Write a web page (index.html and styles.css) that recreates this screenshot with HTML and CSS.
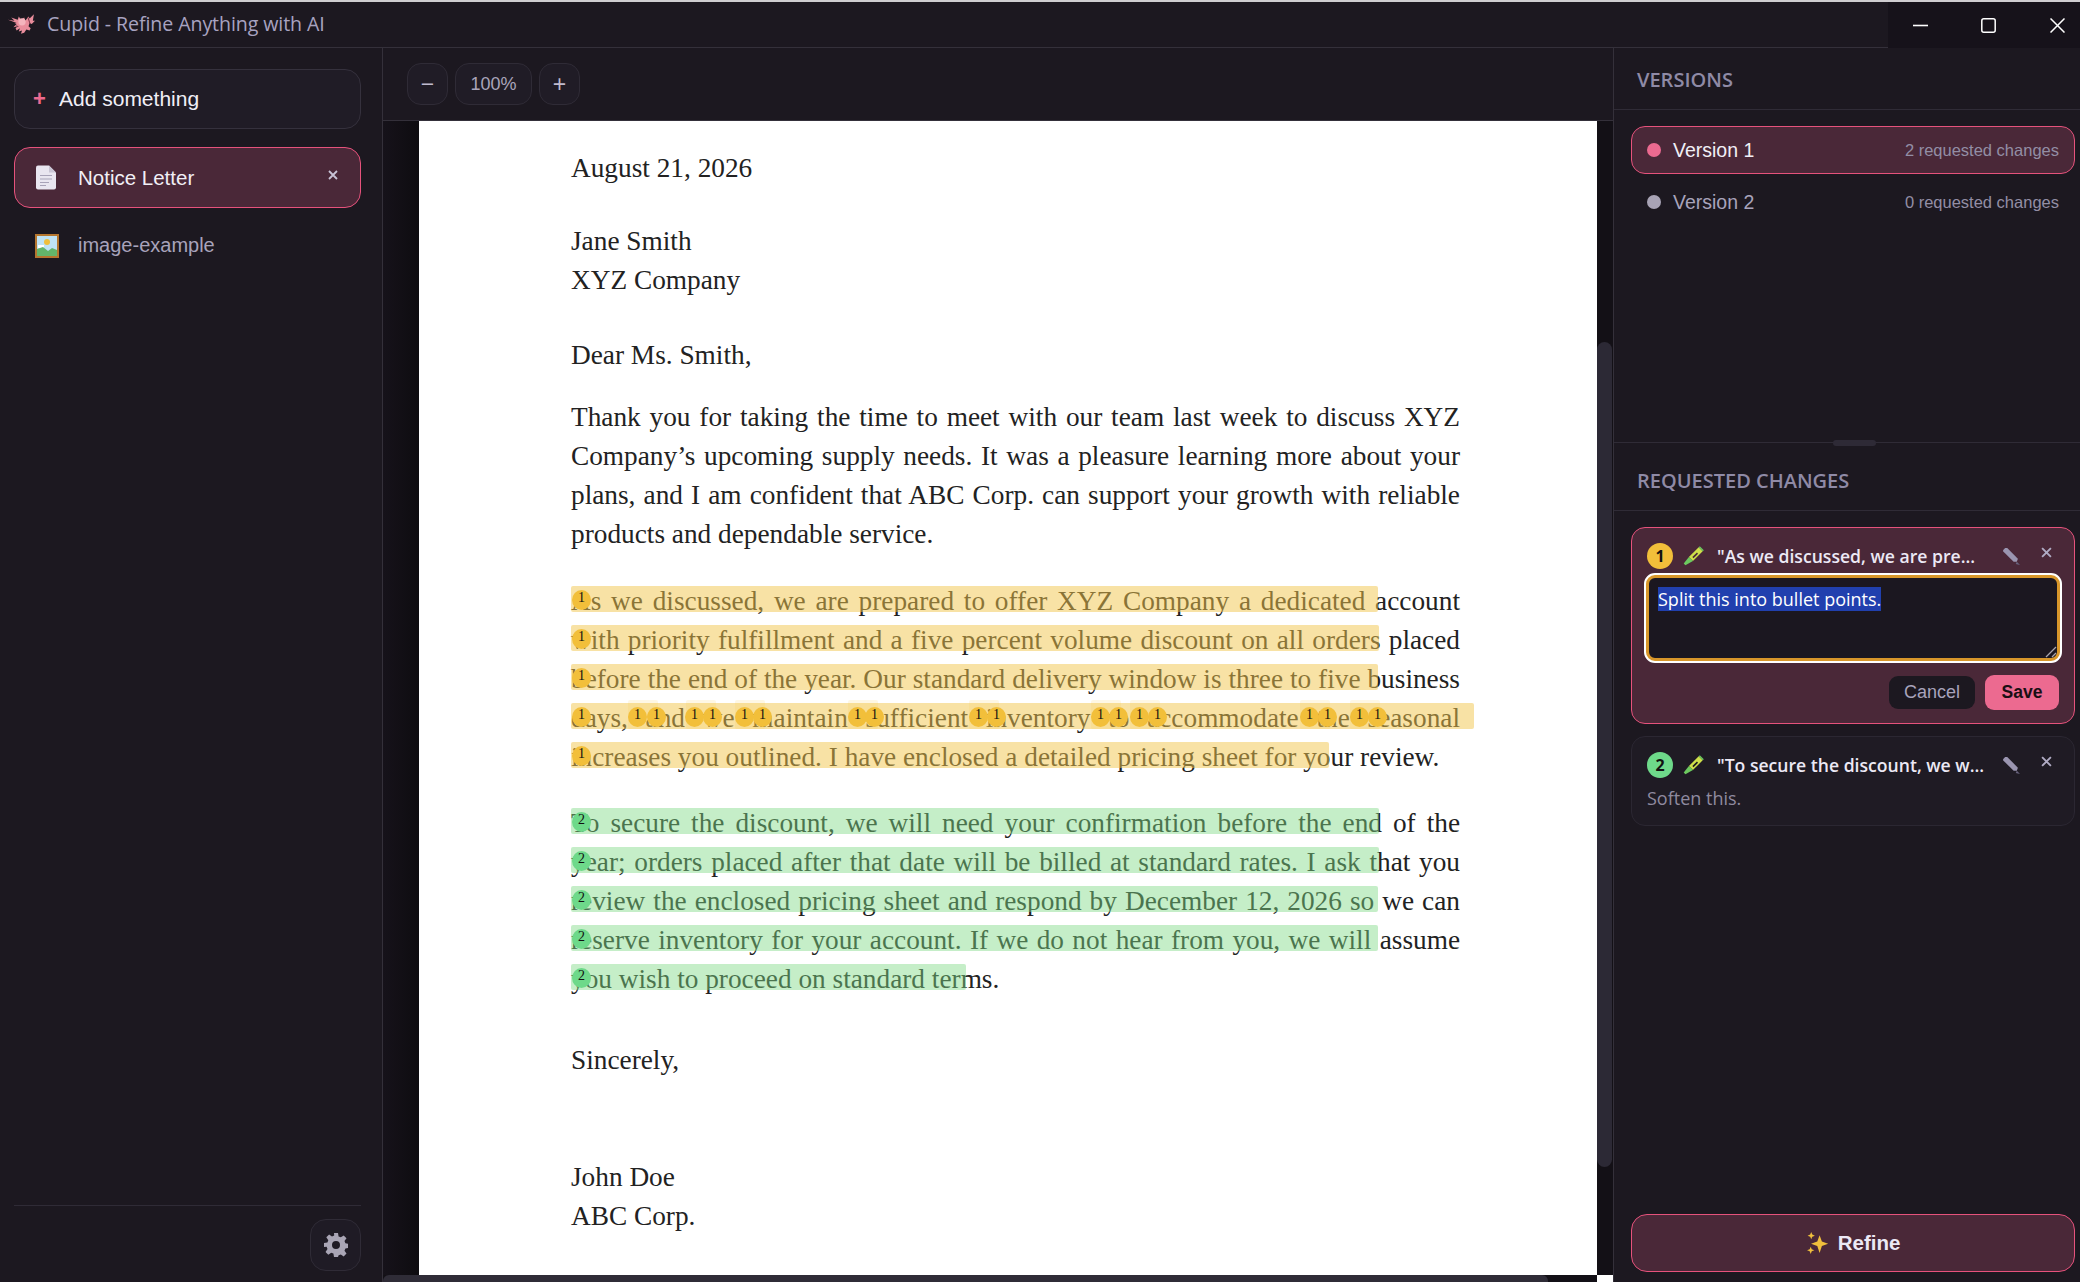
FILE: index.html
```html
<!DOCTYPE html>
<html lang="en">
<head>
<meta charset="utf-8">
<title>Cupid - Refine Anything with AI</title>
<link rel="stylesheet" href="styles.css">
</head>
<body>
<div class="frame">
  <header class="titlebar">
    <div class="brand">
      <svg class="logo" viewBox="1 1 25 18"><path fill="#e98d9c" d="M1 6l6 1-3-3 6 2 1-3 2 3 3-2 1 3 3-4 1 2 4-4-1 6 2 0-3 3-2-1-1 3 2 2-1 2-3-1-2 3-3 1 1-3-3 1 1-3-3 2-1-2 2-2-4 1 3-3-2 0 2-1z"/><circle cx="14" cy="8" r="3.4" fill="#f4b4bd"/><path fill="#7c3a4a" d="M19 4l1 0 2 6-1 0zM8 11l3 1-1 1z"/></svg>
      <span class="app-title">Cupid - Refine Anything with AI</span>
    </div>
    <div class="winctl">
      <svg viewBox="0 0 15 15" class="w-min"><path d="M0 7.5h15" stroke="#fff" stroke-width="1.6"/></svg>
      <svg viewBox="0 0 15 15" class="w-max"><rect x=".8" y=".8" width="13.4" height="13.4" rx="2" fill="none" stroke="#fff" stroke-width="1.5"/></svg>
      <svg viewBox="0 0 15 15" class="w-close"><path d="M.5.5l14 14M14.5.5l-14 14" stroke="#fff" stroke-width="1.5"/></svg>
    </div>
  </header>
  <div class="app">
    <aside class="sidebar">
      <button class="add"><span class="plus">+</span>Add something</button>
      <div class="file active">
        <svg class="ficon" viewBox="0 0 20 24"><path fill="#e9e6f0" d="M2 0h11l7 7v15a2 2 0 0 1-2 2H2a2 2 0 0 1-2-2V2a2 2 0 0 1 2-2z"/><path d="M4 10h12M4 13.5h12M4 17h9M4 20h6" stroke="#a8a3b8" stroke-width="1.2"/><path fill="#c9c5d4" d="M13 0l7 7h-7z"/></svg>
        <span class="fname">Notice Letter</span>
        <svg class="fx" viewBox="0 0 10 10"><path d="M1 1l8 8M9 1l-8 8" stroke="#c8c3d6" stroke-width="1.8"/></svg>
      </div>
      <div class="file">
        <svg class="ficon pic" viewBox="0 0 24 24"><rect width="24" height="24" fill="#b5762f"/><rect x="2" y="2" width="20" height="20" fill="#bfe3f5"/><circle cx="12" cy="8" r="3" fill="#f0bf3c"/><path fill="#fff" d="M3 11h6v3H3z"/><path fill="#63b56a" d="M2 22v-7l6-2 5 4 4-3 5 2v6z"/></svg>
        <span class="fname dim">image-example</span>
      </div>
      <div class="side-foot">
        <button class="gear-btn"><svg viewBox="0 0 24 24" class="gear"><path fill="#a9a5b5" fill-rule="evenodd" d="M10 0h4l.6 3.4 2.2.9L19.700 2.400l2.800 2.800-2 2.900.9 2.200 3.400.6v4l-3.400.6-.9 2.200 2 2.900-2.800 2.800-2.900-2-2.200.9L14 24h-4l-.6-3.400-2.200-.9-2.900 2-2.800-2.800 2-2.900-.9-2.200L0 14v-4l3.400-.6.900-2.200-2-2.900 2.800-2.800 2.900 2 2.200-.9zM12 8a4 4 0 1 0 0 8 4 4 0 0 0 0-8z"/></svg></button>
      </div>
    </aside>
    <main class="main">
      <div class="toolbar">
        <button class="zbtn">−</button>
        <button class="zbtn pct">100%</button>
        <button class="zbtn">+</button>
      </div>
      <div class="viewer">
        <div class="gutter"></div>
        <article class="doc">
          <p class="ln m-date">August 21, 2026</p>
          <p class="ln m-name">Jane Smith</p>
          <p class="ln">XYZ Company</p>
          <p class="ln m-dear">Dear Ms. Smith,</p>
          <div class="para m-p1">
            <span class="ln j">Thank you for taking the time to meet with our team last week to discuss XYZ</span>
            <span class="ln j">Company’s upcoming supply needs. It was a pleasure learning more about your</span>
            <span class="ln j">plans, and I am confident that ABC Corp. can support your growth with reliable</span>
            <span class="ln">products and dependable service.</span>
          </div>
          <div class="para m-p2">
            <span class="ln j">As we discussed, we are prepared to offer XYZ Company a dedicated account<i class="hl y" style="width:807px"></i><b class="bdg y" style="left:1px">1</b></span>
            <span class="ln j">with priority fulfillment and a five percent volume discount on all orders placed<i class="hl y" style="width:808px"></i><b class="bdg y" style="left:1px">1</b></span>
            <span class="ln j">before the end of the year. Our standard delivery window is three to five business<i class="hl y" style="width:807px"></i><b class="bdg y" style="left:1px">1</b></span>
            <span class="ln j">days, and we maintain sufficient inventory to accommodate the seasonal<i class="hl y" style="width:903px"></i><i class="hl y2" style="left:57px;width:30px"></i><i class="hl y2" style="left:115px;width:30px"></i><i class="hl y2" style="left:164px;width:30px"></i><i class="hl y2" style="left:277px;width:30px"></i><i class="hl y2" style="left:398px;width:30px"></i><i class="hl y2" style="left:520px;width:30px"></i><i class="hl y2" style="left:559px;width:30px"></i><i class="hl y2" style="left:729px;width:30px"></i><i class="hl y2" style="left:779px;width:30px"></i><b class="bdg y" style="left:1px">1</b><b class="bdg y" style="left:57px">1</b><b class="bdg y" style="left:76px">1</b><b class="bdg y" style="left:114px">1</b><b class="bdg y" style="left:132px">1</b><b class="bdg y" style="left:164px">1</b><b class="bdg y" style="left:182px">1</b><b class="bdg y" style="left:277px">1</b><b class="bdg y" style="left:294px">1</b><b class="bdg y" style="left:398px">1</b><b class="bdg y" style="left:416px">1</b><b class="bdg y" style="left:520px">1</b><b class="bdg y" style="left:538px">1</b><b class="bdg y" style="left:559px">1</b><b class="bdg y" style="left:577px">1</b><b class="bdg y" style="left:729px">1</b><b class="bdg y" style="left:747px">1</b><b class="bdg y" style="left:779px">1</b><b class="bdg y" style="left:797px">1</b></span>
            <span class="ln">increases you outlined. I have enclosed a detailed pricing sheet for your review.<i class="hl y" style="width:758px"></i><b class="bdg y" style="left:1px">1</b></span>
          </div>
          <div class="para m-p3">
            <span class="ln j">To secure the discount, we will need your confirmation before the end of the<i class="hl g" style="width:808px"></i><b class="bdg g" style="left:1px">2</b></span>
            <span class="ln j">year; orders placed after that date will be billed at standard rates. I ask that you<i class="hl g" style="width:808px"></i><b class="bdg g" style="left:1px">2</b></span>
            <span class="ln j">review the enclosed pricing sheet and respond by December 12, 2026 so we can<i class="hl g" style="width:807px"></i><b class="bdg g" style="left:1px">2</b></span>
            <span class="ln j">reserve inventory for your account. If we do not hear from you, we will assume<i class="hl g" style="width:807px"></i><b class="bdg g" style="left:1px">2</b></span>
            <span class="ln">you wish to proceed on standard terms.<i class="hl g" style="width:395px"></i><b class="bdg g" style="left:1px">2</b></span>
          </div>
          <p class="ln m-sin">Sincerely,</p>
          <p class="ln m-john">John Doe</p>
          <p class="ln">ABC Corp.</p>
        </article>
        <div class="vtrack"><div class="vthumb"></div></div>
      </div>
      <div class="htrack"><div class="hthumb"></div><div class="corner"></div></div>
    </main>
    <aside class="panel">
      <section class="versions">
        <h2 class="phead">VERSIONS</h2>
        <div class="vlist">
          <div class="vrow active"><span class="dot pink"></span><span class="vname">Version 1</span><span class="vcount">2 requested changes</span></div>
          <div class="vrow"><span class="dot grey"></span><span class="vname dim">Version 2</span><span class="vcount">0 requested changes</span></div>
        </div>
        <div class="handle"></div>
      </section>
      <section class="changes">
        <h2 class="phead">REQUESTED CHANGES</h2>
        <div class="clist">
          <div class="card active">
            <div class="chead">
              <span class="num y">1</span>
              <svg class="crayon" viewBox="0 0 20 20"><path fill="#cfe04a" d="M6 10.500L14.500 2l3.500 3.500L9.500 14z"/><path fill="#6cc95f" d="M6 10.500L9.500 14 3 17.500 1.500 16z"/><path fill="#6cc95f" d="M15.500 1l3.500 3.500-1 1L14.500 2z"/><path fill="#4a2838" d="M9 10.500l4-4 1 1-4 4z"/></svg>
              <span class="quote">"As we discussed, we are pre...</span>
              <svg class="edit" viewBox="0 0 16 16"><path fill="#9a95b0" d="M0 2l2-2 2 0 10 10-1 3-3 0L0 3z"/><path fill="#6a6580" d="M13 13l3 3-4-1z"/></svg>
              <svg class="cx" viewBox="0 0 10 10"><path d="M1 1l8 8M9 1l-8 8" stroke="#b0abc4" stroke-width="1.7"/></svg>
            </div>
            <div class="ta"><span class="sel">Split this into bullet points.</span><svg class="grip" viewBox="0 0 12 12"><path d="M1 11L11 1M7 11l4-4" stroke="#a8a4ad" stroke-width="1.3"/></svg></div>
            <div class="actions"><button class="cancel">Cancel</button><button class="save">Save</button></div>
          </div>
          <div class="card">
            <div class="chead">
              <span class="num g">2</span>
              <svg class="crayon" viewBox="0 0 20 20"><path fill="#cfe04a" d="M6 10.500L14.500 2l3.500 3.500L9.500 14z"/><path fill="#6cc95f" d="M6 10.500L9.500 14 3 17.500 1.500 16z"/><path fill="#6cc95f" d="M15.500 1l3.500 3.500-1 1L14.500 2z"/><path fill="#1c1820" d="M9 10.500l4-4 1 1-4 4z"/></svg>
              <span class="quote">"To secure the discount, we w...</span>
              <svg class="edit" viewBox="0 0 16 16"><path fill="#9a95b0" d="M0 2l2-2 2 0 10 10-1 3-3 0L0 3z"/><path fill="#6a6580" d="M13 13l3 3-4-1z"/></svg>
              <svg class="cx" viewBox="0 0 10 10"><path d="M1 1l8 8M9 1l-8 8" stroke="#b0abc4" stroke-width="1.7"/></svg>
            </div>
            <div class="note">Soften this.</div>
          </div>
        </div>
      </section>
      <div class="refine-wrap">
        <button class="refine"><svg class="spark" viewBox="0 0 22 22"><path fill="#f0bf3c" d="M13 3l2.200 6 6 2.200-6 2.200L13 20l-2.200-6.600-6-2.200 6-2.200zM5 0l1 2.500L8.500 3.500 6 4.500 5 7 4 4.500 1.500 3.500 4 2.500zM4.500 14l1 2.500 2.500 1-2.500 1L4.500 21l-1-2.500-2.500-1 2.500-1z"/></svg>Refine</button>
      </div>
    </aside>
  </div>
</div>
</body>
</html>
```
FILE: styles.css
```css
* { box-sizing: border-box; }
html, body { margin: 0; height: 100%; overflow: hidden; background: #1c1820; }
body { font-family: "Liberation Sans", Arial, sans-serif; color: #e8e6f0; }
button { font-family: inherit; cursor: pointer; }
.frame { display: flex; flex-direction: column; height: 1282px; border-top: 2px solid #cfcdd0; }
.titlebar { height: 46px; flex: none; display: flex; justify-content: space-between; background: #1c1820; border-bottom: 1px solid #34303a; }
.brand { display: flex; align-items: center; padding-left: 8px; }
.logo { width: 27px; height: 20px; margin-right: 12px; margin-top: -2px; }
.app-title { font-family: "Open Sans", "Noto Sans", sans-serif; font-size: 19.600px; color: #a8a3c0; letter-spacing: -.09px; margin-top: -2px; }
.winctl { width: 192px; height: 46px; background: #16121a; position: relative; display: flex; align-items: center; }
.winctl svg { width: 15px; height: 15px; flex: none; }
.w-min { margin-left: 25px; }
.w-max { margin-left: 53px; }
.w-close { margin-left: 54px; }

.app { flex: 1; min-height: 0; display: grid; grid-template-columns: 383px 1230px 467px; }
.sidebar { border-right: 1px solid #34303a; padding: 21px 21px 11px 14px; display: flex; flex-direction: column; background: #1c1820; }
.add { height: 60px; width: 347px; flex: none; border: 1px solid #35313d; border-radius: 16px; background: #201c26; color: #f1eff6; font-size: 21px; text-align: left; padding: 0 0 0 18px; display: flex; align-items: center; }
.plus { color: #ec6a90; font-weight: 700; font-size: 22px; width: 26px; }
.file { height: 61px; width: 347px; flex: none; display: flex; align-items: center; padding-left: 21px; position: relative; border-radius: 16px; margin-top: 18px; }
.file + .file { margin-top: 7px; }
.file.active { background: #4a2838; border: 1.500px solid #e6527c; }
.ficon { width: 20px; height: 25px; flex: none; }
.ficon.pic { width: 24px; height: 24px; margin-right: -1px; }
.fname { margin-left: 22px; font-size: 20.500px; color: #f1eff6; }
.fname.dim { margin-left: 20px; font-size: 20px; color: #a8a3bb; }
.fx { position: absolute; right: 22px; top: 22px; width: 10px; height: 10px; }
.side-foot { margin-top: auto; border-top: 1px solid #2f2b36; padding-top: 13px; width: 347px; display: flex; justify-content: flex-end; }
.gear-btn { width: 51px; height: 52px; border: 1px solid #2f2b36; border-radius: 16px; background: #1f1b25; padding: 0; display: flex; align-items: center; justify-content: center; }
.gear { width: 24px; height: 24px; }

.main { display: flex; flex-direction: column; min-width: 0; min-height: 0; background: #131016; }
.toolbar { height: 73px; flex: none; display: flex; align-items: center; gap: 7px; padding-left: 24px; background: #1c1820; border-bottom: 1px solid #34303a; }
.zbtn { width: 41px; height: 42px; border: 1px solid #2f2b36; border-radius: 14px; background: #201c26; color: #c0bbcf; font-size: 23px; line-height: 1; padding: 0; }
.zbtn.pct { width: 77px; font-size: 18px; color: #aaa5ba; }
.viewer { flex: 1; min-height: 0; display: flex; overflow: hidden; }
.gutter { width: 36px; flex: none; background: linear-gradient(90deg, #16121a, #0e0c10); }
.doc { width: 1178px; flex: none; background: #fff; padding: 28px 137px 0 152px; font-family: "Liberation Serif", "Times New Roman", serif; font-size: 27.300px; line-height: 39px; color: #222; overflow: hidden; }
.ln { display: block; position: relative; margin: 0; white-space: nowrap; height: 39px; }
.ln.j { text-align: justify; text-align-last: justify; white-space: normal; }
.para { margin: 0; }
.m-name { margin-top: 34px; }
.m-dear { margin-top: 36px; }
.m-p1 { margin-top: 22.500px; }
.m-p2 { margin-top: 28.500px; }
.m-p3 { margin-top: 27px; }
.m-sin { margin-top: 42px; }
.m-john { margin-top: 78px; }
.hl { position: absolute; left: 0; top: 4px; height: 26px; border-radius: 2px; }
.hl.y { background: rgba(241, 197, 75, .5); }
.hl.y2 { background: rgba(245, 197, 66, .14); top: .5px; height: 29.500px; }
.hl.g { background: rgba(127, 218, 133, .45); }
.bdg { position: absolute; top: 8px; width: 19px; height: 20px; border-radius: 50%; font: 400 14px/15px "Liberation Serif", serif; color: #111; text-align: center; text-align-last: center; }
.bdg.y { background: #f2bf3a; }
.bdg.g { background: #6ed98a; }
.vtrack { flex: 1; background: #131016; padding-top: 221px; }
.vthumb { width: 15px; height: 825px; border-radius: 8px; background: #2c2935; }
.htrack { height: 7px; flex: none; display: flex; background: #131016; }
.hthumb { width: 1165px; height: 7px; border-radius: 6px 6px 0 0; background: #2f2c37; }
.corner { margin-left: auto; width: 16px; height: 7px; background: #fff; }

.panel { border-left: 1px solid #34303a; background: #1c1820; display: flex; flex-direction: column; min-height: 0; }
.phead { margin: 0; height: 62px; display: flex; align-items: center; padding: 2px 0 0 23px; font: 600 20px "Open Sans", "Noto Sans", sans-serif; color: #8f8aa6; border-bottom: 1px solid #2f2b36; }
.versions { height: 395px; flex: none; position: relative; border-bottom: 1px solid #2f2b36; }
.versions .phead { height: 62px; }
.vlist { padding: 16px 5px 0 17px; }
.vrow { height: 48px; display: flex; align-items: center; padding: 0 15px 0 15px; border-radius: 14px; border: 1.500px solid transparent; margin-bottom: 4px; }
.vrow.active { background: #4a2838; border-color: #e6527c; }
.dot { width: 14px; height: 14px; border-radius: 50%; margin-right: 12px; }
.dot.pink { background: #ec6a90; }
.dot.grey { background: #a8a3b5; }
.vname { font-size: 19.500px; color: #f1eff6; }
.vname.dim { color: #a8a3bb; }
.vcount { margin-left: auto; font-size: 16.500px; color: #938ea5; }
.handle { position: absolute; left: 219px; bottom: -4px; width: 43px; height: 6px; border-radius: 3px; background: #2e2a36; }
.changes { flex: 1; min-height: 0; }
.changes .phead { height: 68px; padding-top: 7px; }
.clist { padding: 16px 5px 0 17px; display: flex; flex-direction: column; gap: 12px; }
.card { border: 1px solid #2b2732; border-radius: 14px; height: 90px; padding: 0 15px; background: #1f1b24; }
.card.active { height: 197px; background: #4a2838; border: 1.500px solid #e6527c; }
.chead { display: flex; align-items: center; height: 54px; padding-top: 2px; position: relative; }
.card.active .chead { height: 46px; padding-top: 10px; }
.num { width: 26px; height: 26px; flex: none; border-radius: 50%; text-align: center; font: 700 16px/26px "Open Sans", sans-serif; color: #111; }
.num.y { background: #f2bf3a; }
.num.g { background: #6ed98a; }
.crayon { width: 23px; height: 23px; margin-left: 9px; flex: none; }
.quote { margin-left: 12px; font: 600 17.600px "Open Sans", "Noto Sans", sans-serif; color: #ece9f5; white-space: nowrap; }
.edit { position: absolute; left: 356px; top: 20px; width: 17px; height: 17px; }
.cx { position: absolute; left: 394px; top: 19px; width: 11px; height: 11px; }
.ta { position: relative; margin-left: -2px; width: 416px; height: 88px; border-radius: 10px; background: #1b1720; border: 4px solid #d8962a; outline: 2px solid #fff; outline-offset: -1px; padding: 9px 9px; font: 400 18px/25px "Open Sans", "Noto Sans", sans-serif; color: #fff; }
.sel { background: #2140ae; }
.grip { position: absolute; right: 0; bottom: 0; width: 12px; height: 12px; }
.actions { display: flex; justify-content: flex-end; align-items: center; gap: 10px; margin-top: 13px; }
.cancel { width: 86px; height: 33px; border: 0; border-radius: 9px; background: #1c1820; color: #a8a3bb; font-size: 18px; padding: 0; }
.save { width: 74px; height: 35px; border: 0; border-radius: 9px; background: #ec6a90; color: #1a0f14; font-size: 17.500px; font-weight: 700; padding: 0; }
.note { margin-top: -5px; font: 400 18px "Open Sans", "Noto Sans", sans-serif; color: #8f8a9f; }
.refine-wrap { padding: 0 5px 10px 17px; flex: none; }
.refine { width: 100%; height: 58px; border: 1.500px solid #e6527c; border-radius: 16px; background: #4a2838; color: #ece9f5; font-size: 20.500px; font-weight: 700; display: flex; align-items: center; justify-content: center; gap: 9px; }
.spark { width: 23px; height: 23px; }
```
